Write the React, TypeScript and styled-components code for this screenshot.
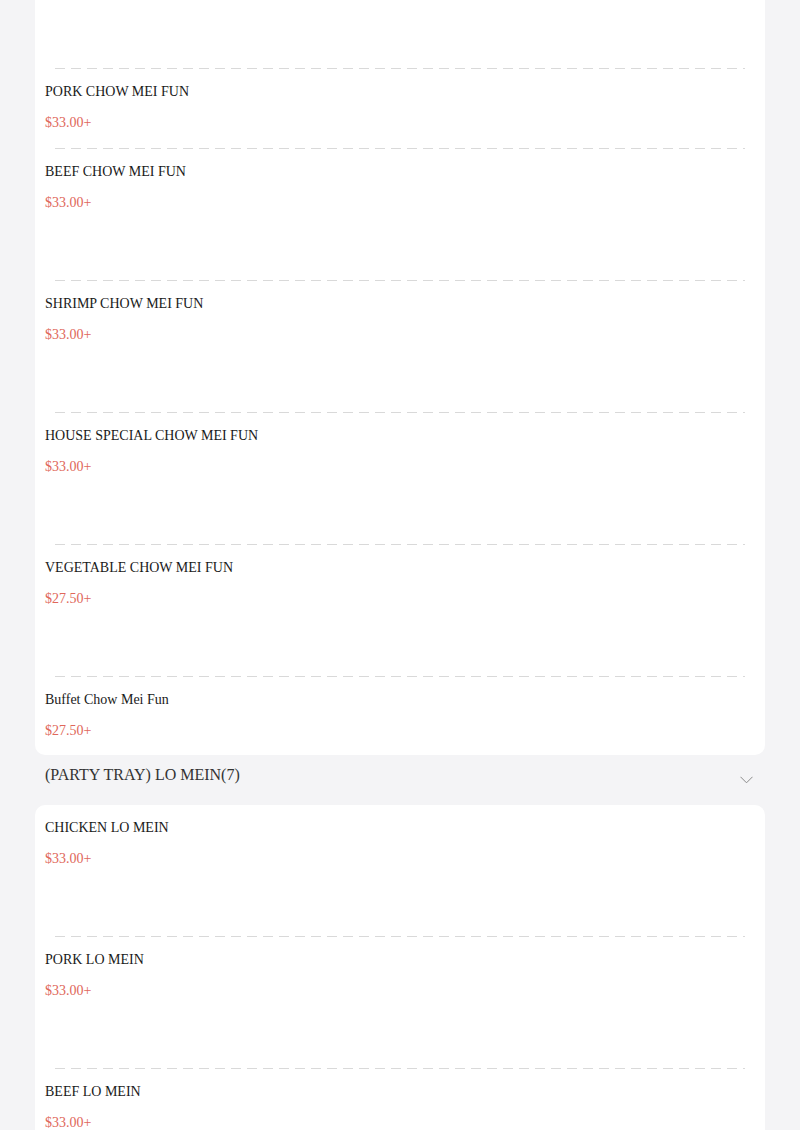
import React from "react";
import styled, { createGlobalStyle } from "styled-components";

const GlobalStyle = createGlobalStyle`
  html, body {
    margin: 0;
    padding: 0;
    background: #f4f4f6;
    font-family: "Liberation Serif", "Times New Roman", serif;
  }
`;

interface MenuItem {
  name: string;
  price: string;
  tall?: boolean;
}

interface Section {
  title?: string;
  items: MenuItem[];
}

const sections: Section[] = [
  {
    items: [
      { name: "CHICKEN CHOW MEI FUN", price: "$33.00+", tall: true },
      { name: "PORK CHOW MEI FUN", price: "$33.00+" },
      { name: "BEEF CHOW MEI FUN", price: "$33.00+", tall: true },
      { name: "SHRIMP CHOW MEI FUN", price: "$33.00+", tall: true },
      { name: "HOUSE SPECIAL CHOW MEI FUN", price: "$33.00+", tall: true },
      { name: "VEGETABLE CHOW MEI FUN", price: "$27.50+", tall: true },
      { name: "Buffet Chow Mei Fun", price: "$27.50+" },
    ],
  },
  {
    title: "(PARTY TRAY) LO MEIN(7)",
    items: [
      { name: "CHICKEN LO MEIN", price: "$33.00+", tall: true },
      { name: "PORK LO MEIN", price: "$33.00+", tall: true },
      { name: "BEEF LO MEIN", price: "$33.00+", tall: true },
      { name: "SHRIMP LO MEIN", price: "$33.00+", tall: true },
    ],
  },
];

// the list is scrolled: the top of the first card sits above the viewport
const Page = styled.div`
  margin-top: -63px;
  padding: 0 35px;
  height: 1193px;
  overflow: hidden;
`;

const Card = styled.div`
  background: #ffffff;
  border-radius: 10px;
  display: flex;
  flex-direction: column;
`;

const Divider = styled.div`
  height: 1px;
  margin: 0 20px;
  background: repeating-linear-gradient(
    90deg,
    #d9d9d9 0 10px,
    transparent 10px 16px
  );
`;

const Item = styled.div<{ $tall?: boolean }>`
  box-sizing: border-box;
  min-height: ${(p) => (p.$tall ? "131px" : "79px")};
  padding: 13px 10px 14px;
  display: flex;
  flex-direction: column;

  &:last-child {
    min-height: ${(p) => (p.$tall ? "131px" : "78px")};
  }
`;

const ItemName = styled.div`
  font-size: 14px;
  line-height: 20px;
  color: #1a1a1a;
`;

const ItemPrice = styled.div`
  margin-top: 11px;
  font-size: 14px;
  line-height: 20px;
  color: #e0675a;
`;

const SectionHeader = styled.div`
  box-sizing: border-box;
  height: 50px;
  padding: 10px 12px 0 10px;
  display: flex;
  justify-content: space-between;
  align-items: flex-start;
`;

const SectionTitle = styled.div`
  font-size: 16px;
  line-height: 20px;
  color: #333333;
`;

const Chevron = styled.svg`
  margin-top: 11px;
  width: 13px;
  height: 8px;
`;

const ChevronDown = () => (
  <Chevron viewBox="0 0 13 8">
    <path d="M0.5 0.8 L6.5 6.8 L12.5 0.8" fill="none" stroke="#8a8a8a" strokeWidth="1" />
  </Chevron>
);

export default function App() {
  return (
    <>
      <GlobalStyle />
      <Page>
        {sections.map((section, si) => (
          <React.Fragment key={si}>
            {section.title && (
              <SectionHeader>
                <SectionTitle>{section.title}</SectionTitle>
                <ChevronDown />
              </SectionHeader>
            )}
            <Card>
              {section.items.map((item, ii) => (
                <React.Fragment key={ii}>
                  {ii > 0 && <Divider />}
                  <Item $tall={item.tall}>
                    <ItemName>{item.name}</ItemName>
                    <ItemPrice>{item.price}</ItemPrice>
                  </Item>
                </React.Fragment>
              ))}
            </Card>
          </React.Fragment>
        ))}
      </Page>
    </>
  );
}
